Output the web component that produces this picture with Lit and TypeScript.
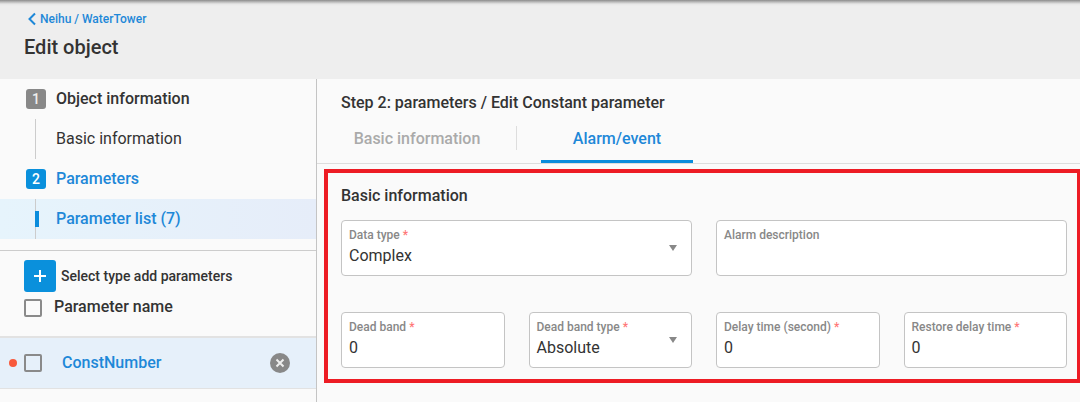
import { LitElement, html, css } from "lit";
import { customElement } from "lit/decorators.js";

const topFields = [
  { label: "Data type", required: true, value: "Complex", select: true, wide: true },
  { label: "Alarm description", required: false, value: "", select: false, wide: true },
];

const bottomFields = [
  { label: "Dead band", required: true, value: "0", select: false, wide: false },
  { label: "Dead band type", required: true, value: "Absolute", select: true, wide: false },
  { label: "Delay time (second)", required: true, value: "0", select: false, wide: false },
  { label: "Restore delay time", required: true, value: "0", select: false, wide: false },
];

@customElement("app-root")
export class AppRoot extends LitElement {
  static styles = css`
    :host {
      display: block;
      height: 402px;
      overflow: hidden;
      background: #fafafa;
      color: #333;
      font-family: Roboto, "Liberation Sans", sans-serif;
    }
    .header {
      height: 79px;
      box-sizing: border-box;
      padding: 12px 0 0 24px;
      background: linear-gradient(#8c8c8c 0, #bbb 2px, #e6e6e6 4px, #eee 6px);
    }
    .crumb {
      display: flex;
      align-items: center;
      gap: 3px;
      height: 14px;
      margin-left: 3px;
      color: #1e88d8;
      font-size: 12px;
      font-weight: 500;
    }
    .crumb svg {
      width: 10px;
      height: 14px;
    }
    h1 {
      margin: 9px 0 0;
      font-size: 20px;
      line-height: 24px;
      font-weight: 500;
      color: #333;
    }
    .body {
      display: flex;
      height: 323px;
    }
    .side {
      width: 317px;
      flex: none;
      box-sizing: border-box;
      border-right: 1px solid #c4c4c4;
      padding-top: 10px;
    }
    .step {
      display: flex;
      align-items: center;
      height: 20px;
      padding-left: 26px;
      font-size: 16px;
      font-weight: 500;
    }
    .step span {
      margin-bottom: 2px;
    }
    .badge {
      width: 20px;
      height: 20px;
      margin-right: 10px;
      border-radius: 3px;
      background: #888;
      color: #eee;
      font-size: 14px;
      line-height: 20px;
      text-align: center;
    }
    .step.on {
      color: #1e88d8;
    }
    .step.on .badge {
      background: #0a90dc;
      color: #fff;
    }
    .sub {
      position: relative;
      display: flex;
      align-items: center;
      height: 40px;
      box-sizing: border-box;
      margin: 10px 0;
      padding: 0 0 2px 56px;
      font-size: 16px;
    }
    .sub::before {
      content: "";
      position: absolute;
      left: 35px;
      top: 0;
      bottom: 0;
      width: 1px;
      background: #ccc;
    }
    .sub.on {
      background: linear-gradient(90deg, #e6f4fc, #e6edf9);
      color: #1e88d8;
      font-weight: 500;
    }
    .sub.on::after {
      content: "";
      position: absolute;
      left: 35px;
      top: 12px;
      width: 4px;
      height: 16px;
      background: #0a8cdc;
    }
    .add {
      display: flex;
      align-items: center;
      gap: 5px;
      margin-top: 11px;
      border-top: 1px solid #ccc;
      padding: 9px 0 0 24px;
      font-size: 14px;
      font-weight: 500;
    }
    .plus {
      width: 32px;
      height: 32px;
      border-radius: 3px;
      background: #0a90dc;
      display: flex;
      align-items: center;
      justify-content: center;
    }
    .plus svg {
      width: 14px;
      height: 14px;
    }
    .check {
      width: 18px;
      height: 18px;
      flex: none;
      box-sizing: border-box;
      border: 2px solid #8a8a8a;
      border-radius: 2px;
    }
    .names {
      display: flex;
      align-items: center;
      gap: 12px;
      height: 18px;
      margin-top: 7px;
      padding-left: 24px;
      font-size: 16px;
      font-weight: 500;
    }
    .names span {
      margin-bottom: 4px;
    }
    .param {
      display: flex;
      align-items: center;
      height: 50px;
      margin-top: 19px;
      border-top: 2px solid #e2e2e2;
      border-bottom: 1px solid #e2e2e2;
      background: #e6f0fa;
      padding-left: 9px;
      color: #1e88d8;
      font-size: 16px;
      font-weight: 500;
    }
    .dot {
      width: 8px;
      height: 8px;
      margin-right: 7px;
      border-radius: 50%;
      background: #f8593c;
    }
    .param .name {
      margin: 0 0 2px 20px;
      flex: 1;
    }
    .remove {
      width: 20px;
      height: 20px;
      margin-right: 26px;
    }
    .main {
      flex: 1;
      min-width: 0;
    }
    .title {
      height: 46px;
      box-sizing: border-box;
      padding: 15px 0 0 24px;
      font-size: 16px;
      line-height: 18px;
      font-weight: 500;
    }
    .tabs {
      display: flex;
      height: 38px;
      margin-bottom: 5px;
      border-bottom: 1px solid #ddd;
      font-size: 16px;
      font-weight: 500;
    }
    .tab {
      display: flex;
      justify-content: center;
      padding-top: 5px;
      line-height: 18px;
      box-sizing: border-box;
      color: #aaa;
    }
    .tab.first {
      width: 200px;
      position: relative;
    }
    .tab.first::after {
      content: "";
      position: absolute;
      right: 0;
      top: 1px;
      width: 1px;
      height: 24px;
      background: #ddd;
    }
    .tab.on {
      width: 152px;
      margin-left: 24px;
      color: #1e88d8;
      border-bottom: 3px solid #0a8cdc;
    }
    .box {
      height: 214px;
      margin-left: 7px;
      box-sizing: border-box;
      border: 4px solid #ed1c24;
      border-right-width: 3px;
      padding: 14px 10px 0 13px;
    }
    h2 {
      margin: 0 0 15px;
      font-size: 16px;
      line-height: 18px;
      font-weight: 500;
    }
    .grid {
      display: grid;
      grid-template-columns: repeat(4, 1fr);
      column-gap: 24px;
      row-gap: 36px;
    }
    .field {
      position: relative;
      height: 56px;
      box-sizing: border-box;
      border: 1px solid #c4c4c4;
      border-radius: 4px;
      background: #fff;
      padding: 7px 7px 0;
    }
    .field.wide {
      grid-column: span 2;
    }
    .label {
      height: 14px;
      color: #888;
      font-size: 12px;
      line-height: 14px;
      font-weight: 500;
    }
    .label i {
      margin-left: 3px;
      color: #f77;
      font-style: normal;
    }
    .value {
      margin-top: 4px;
      font-size: 16px;
      line-height: 20px;
      color: #333;
    }
    .arrow {
      position: absolute;
      right: 14px;
      top: 24px;
      width: 0;
      height: 0;
      border-left: 4.5px solid transparent;
      border-right: 4.5px solid transparent;
      border-top: 6px solid #888;
    }
  `;

  renderField(f: (typeof topFields)[number]) {
    return html`
      <div class="field ${f.wide ? "wide" : ""}">
        <div class="label">${f.label}${f.required ? html`<i>*</i>` : ""}</div>
        <div class="value">${f.value}</div>
        ${f.select ? html`<div class="arrow"></div>` : ""}
      </div>
    `;
  }

  render() {
    return html`
      <div class="header">
        <div class="crumb">
          <svg viewBox="0 0 10 14">
            <path d="M8 1.5 2.5 7 8 12.5" fill="none" stroke="#1e88d8" stroke-width="2" />
          </svg>
          Neihu / WaterTower
        </div>
        <h1>Edit object</h1>
      </div>
      <div class="body">
        <div class="side">
          <div class="step"><div class="badge">1</div><span>Object information</span></div>
          <div class="sub">Basic information</div>
          <div class="step on"><div class="badge">2</div><span>Parameters</span></div>
          <div class="sub on">Parameter list (7)</div>
          <div class="add">
            <div class="plus">
              <svg viewBox="0 0 14 14">
                <path d="M7 1v12M1 7h12" stroke="#fff" stroke-width="2" />
              </svg>
            </div>
            Select type add parameters
          </div>
          <div class="names">
            <div class="check"></div>
            <span>Parameter name</span>
          </div>
          <div class="param">
            <div class="dot"></div>
            <div class="check"></div>
            <div class="name">ConstNumber</div>
            <svg class="remove" viewBox="0 0 20 20">
              <circle cx="10" cy="10" r="10" fill="#888" />
              <path d="M6.5 6.5l7 7M13.5 6.5l-7 7" stroke="#eee" stroke-width="2" />
            </svg>
          </div>
        </div>
        <div class="main">
          <div class="title">Step 2: parameters / Edit Constant parameter</div>
          <div class="tabs">
            <div class="tab first">Basic information</div>
            <div class="tab on">Alarm/event</div>
          </div>
          <div class="box">
            <h2>Basic information</h2>
            <div class="grid">
              ${topFields.map((f) => this.renderField(f))}
              ${bottomFields.map((f) => this.renderField(f))}
            </div>
          </div>
        </div>
      </div>
    `;
  }
}
